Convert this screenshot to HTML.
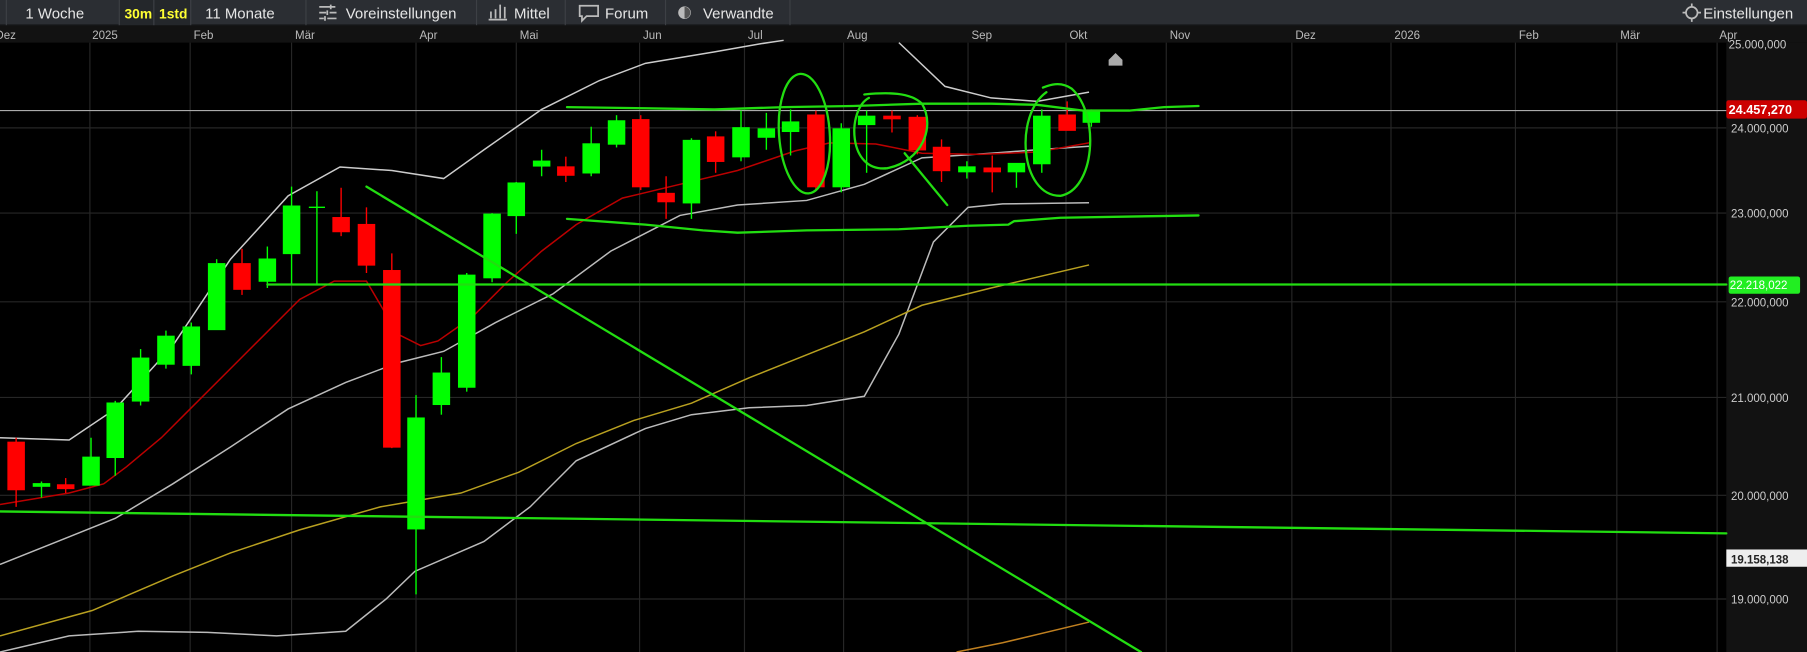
<!DOCTYPE html>
<html><head><meta charset="utf-8"><style>
html,body{margin:0;padding:0;background:#000;width:1807px;height:652px;overflow:hidden}
svg{display:block}
text{font-family:"Liberation Sans",sans-serif}
</style></head><body>
<svg width="1807" height="652" viewBox="0 0 1568 566" preserveAspectRatio="none" xmlns="http://www.w3.org/2000/svg">
<rect width="1568" height="566" fill="#000"/>
<rect x="0" y="0" width="1568" height="22" fill="#2b2e33"/>
<rect x="0" y="21" width="1568" height="1" fill="#1a1c1f"/>
<rect x="103" y="0" width="62" height="22" fill="#24272b"/>
<g fill="#3d4045"><rect x="5" y="0" width="1" height="22"/><rect x="103" y="0" width="1" height="22"/><rect x="133" y="0" width="1" height="22"/><rect x="165" y="0" width="1" height="22"/><rect x="265" y="0" width="1" height="22"/><rect x="413" y="0" width="1" height="22"/><rect x="490" y="0" width="1" height="22"/><rect x="577" y="0" width="1" height="22"/><rect x="685" y="0" width="1" height="22"/></g>
<g font-size="13" fill="#e6e6e6">
<text x="22" y="16">1 Woche</text>
<text x="108" y="16" fill="#ffff33" font-size="12" font-weight="bold">30m</text>
<text x="138" y="16" fill="#ffff33" font-size="12" font-weight="bold">1std</text>
<text x="178" y="16">11 Monate</text>
<text x="300" y="16">Voreinstellungen</text>
<text x="446" y="16">Mittel</text>
<text x="525" y="16">Forum</text>
<text x="610" y="16">Verwandte</text>
<text x="1478" y="16">Einstellungen</text>
</g>
<g stroke="#bbb" stroke-width="1.5" fill="none">
<path d="M277 6h14M277 11h6M286 11h6M277 16h4M284 16h8M287 4v4M284 9v4M282 14v4"/>
<path d="M426 16v-6M430 16v-8M434 16v-12M438 16v-10M424 17h16"/>
<path d="M503 5h16v9h-10l-4 4v-4h-2z"/>
<path d="M1463 11a5 5 0 1 0 10 0a5 5 0 1 0 -10 0M1468 3v3M1468 16v3M1460 11h3M1473 11h3"/>
</g>
<circle cx="594" cy="11" r="5.5" fill="#bbb"/><path d="M594 6a5 5 0 0 1 0 10z" fill="#555"/>
<rect x="0" y="22" width="1568" height="15" fill="#121212"/>
<g font-size="10" fill="#bbb">
<text x="-4" y="34">Dez</text><text x="80" y="34">2025</text><text x="168" y="34">Feb</text><text x="256" y="34">Mär</text><text x="364" y="34">Apr</text><text x="451" y="34">Mai</text><text x="558" y="34">Jun</text><text x="649" y="34">Jul</text><text x="735" y="34">Aug</text><text x="843" y="34">Sep</text><text x="928" y="34">Okt</text><text x="1015" y="34">Nov</text><text x="1124" y="34">Dez</text><text x="1210" y="34">2026</text><text x="1318" y="34">Feb</text><text x="1406" y="34">Mär</text><text x="1492" y="34">Apr</text>
</g>
<g stroke="#262626" stroke-width="1">
<path d="M78 37V566M165 37V566M253 37V566M361 37V566M448 37V566M555 37V566M646 37V566M732 37V566M840 37V566M925 37V566M1012 37V566M1121 37V566M1207 37V566M1315 37V566M1403 37V566M1490 37V566"/>
<path d="M0 111H1498M0 185H1498M0 262H1498M0 345H1498M0 430H1498M0 520H1498"/>
</g>
<rect x="1498" y="37" width="70" height="529" fill="#121212"/>
<g font-size="10" fill="#ccc">
<text x="1500" y="42">25.000,000</text><text x="1502" y="115">24.000,000</text><text x="1502" y="189">23.000,000</text><text x="1502" y="266">22.000,000</text><text x="1502" y="349">21.000,000</text><text x="1502" y="434">20.000,000</text><text x="1502" y="524">19.000,000</text>
</g>
<rect x="1498" y="87" width="70" height="16" rx="2" fill="#cc0000"/><text x="1500" y="99" font-size="11" font-weight="bold" fill="#fff">24.457,270</text>
<rect x="1500" y="240" width="62" height="15" rx="2" fill="#22ee22"/><text x="1501" y="251" font-size="10" fill="#fff">22.218,022</text>
<rect x="1498" y="477" width="70" height="15" fill="#eee"/><text x="1502" y="489" font-size="10" font-weight="bold" fill="#222">19.158,138</text>
<path d="M0 96H1498" stroke="#aaa" stroke-width="1"/>
<path d="M962 52l6-6 6 6v5h-12z" fill="#aaa"/>
<g fill="none" stroke-width="1.3">
<path stroke="#ccc" d="M0 380L60 382L100 355L150 300L200 225L250 170L295 145L340 148L385 155L420 130L470 95L520 70L560 55L620 45L660 38L680 35M780 37L820 75L860 85L900 88L945 80"/>
<path stroke="#bbb" d="M0 490L50 470L100 450L150 420L200 388L250 355L300 332L345 315L385 305L430 280L480 255L530 218L590 187L640 178L700 174L750 160L800 137L860 133L900 130L945 127"/>
<path stroke="#bbb" d="M0 566L60 552L120 548L180 549L240 552L300 548L335 520L360 496L420 470L460 440L500 400L560 372L600 360L650 354L700 352L750 344L780 290L810 210L840 180L870 177L945 176"/>
<path stroke="#b00" d="M0 438L60 428L90 420L110 405L140 380L160 360L200 320L230 290L260 260L290 244L318 244L345 290L365 300L380 296L410 275L440 245L470 218L500 195L540 172L590 160L640 148L690 131L720 124L760 125L800 133L850 134L900 132L945 124"/>
<path stroke="#b8a020" d="M0 552L80 530L150 500L200 480L260 460L330 440L400 428L450 410L500 385L550 365L600 350L650 328L700 308L750 288L800 265L860 250L945 230"/>
<path stroke="#c08020" d="M830 566L870 558L945 540"/>
</g>
<g stroke-width="1.2">
<g stroke="#f00" fill="#f00"><path d="M14 380V440"/><rect x="7" y="384" width="14" height="41"/></g>
<g stroke="#0f0" fill="#0f0"><path d="M36 418V432"/><rect x="29" y="420" width="14" height="2"/></g>
<g stroke="#f00" fill="#f00"><path d="M57 415V428"/><rect x="50" y="421" width="14" height="3"/></g>
<g stroke="#0f0" fill="#0f0"><path d="M79 380V421"/><rect x="72" y="397" width="14" height="24"/></g>
<g stroke="#0f0" fill="#0f0"><path d="M100 348V413"/><rect x="93" y="350" width="14" height="47"/></g>
<g stroke="#0f0" fill="#0f0"><path d="M122 303V352"/><rect x="115" y="311" width="14" height="37"/></g>
<g stroke="#0f0" fill="#0f0"><path d="M144 287V320"/><rect x="137" y="292" width="14" height="24"/></g>
<g stroke="#0f0" fill="#0f0"><path d="M166 280V325"/><rect x="159" y="284" width="14" height="33"/></g>
<g stroke="#0f0" fill="#0f0"><path d="M188 225V286"/><rect x="181" y="229" width="14" height="57"/></g>
<g stroke="#f00" fill="#f00"><path d="M210 216V256"/><rect x="203" y="229" width="14" height="22"/></g>
<g stroke="#0f0" fill="#0f0"><path d="M232 214V250"/><rect x="225" y="225" width="14" height="19"/></g>
<g stroke="#0f0" fill="#0f0"><path d="M253 162V247"/><rect x="246" y="179" width="14" height="41"/></g>
<g stroke="#0f0" fill="#0f0"><path d="M275 166V247"/><path d="M268 180H282"/></g>
<g stroke="#f00" fill="#f00"><path d="M296 163V205"/><rect x="289" y="189" width="14" height="12"/></g>
<g stroke="#f00" fill="#f00"><path d="M318 180V237"/><rect x="311" y="195" width="14" height="35"/></g>
<g stroke="#f00" fill="#f00"><path d="M340 220V389"/><rect x="333" y="235" width="14" height="153"/></g>
<g stroke="#0f0" fill="#0f0"><path d="M361 343V516"/><rect x="354" y="363" width="14" height="96"/></g>
<g stroke="#0f0" fill="#0f0"><path d="M383 310V360"/><rect x="376" y="324" width="14" height="27"/></g>
<g stroke="#0f0" fill="#0f0"><path d="M405 237V340"/><rect x="398" y="239" width="14" height="97"/></g>
<g stroke="#0f0" fill="#0f0"><path d="M427 185V245"/><rect x="420" y="186" width="14" height="55"/></g>
<g stroke="#0f0" fill="#0f0"><path d="M448 158V203"/><rect x="441" y="159" width="14" height="28"/></g>
<g stroke="#0f0" fill="#0f0"><path d="M470 130V153"/><rect x="463" y="140" width="14" height="4"/></g>
<g stroke="#f00" fill="#f00"><path d="M491 136V158"/><rect x="484" y="145" width="14" height="7"/></g>
<g stroke="#0f0" fill="#0f0"><path d="M513 110V153"/><rect x="506" y="125" width="14" height="25"/></g>
<g stroke="#0f0" fill="#0f0"><path d="M535 100V128"/><rect x="528" y="105" width="14" height="20"/></g>
<g stroke="#f00" fill="#f00"><path d="M556 100V165"/><rect x="549" y="104" width="14" height="58"/></g>
<g stroke="#f00" fill="#f00"><path d="M578 153V190"/><rect x="571" y="168" width="14" height="7"/></g>
<g stroke="#0f0" fill="#0f0"><path d="M600 120V190"/><rect x="593" y="122" width="14" height="54"/></g>
<g stroke="#f00" fill="#f00"><path d="M621 114V150"/><rect x="614" y="119" width="14" height="21"/></g>
<g stroke="#0f0" fill="#0f0"><path d="M643 96V140"/><rect x="636" y="111" width="14" height="25"/></g>
<g stroke="#0f0" fill="#0f0"><path d="M665 98V130"/><rect x="658" y="112" width="14" height="7"/></g>
<g stroke="#0f0" fill="#0f0"><path d="M686 95V135"/><rect x="679" y="106" width="14" height="8"/></g>
<g stroke="#f00" fill="#f00"><path d="M708 96V165"/><rect x="701" y="100" width="14" height="62"/></g>
<g stroke="#0f0" fill="#0f0"><path d="M730 107V167"/><rect x="723" y="112" width="14" height="50"/></g>
<g stroke="#0f0" fill="#0f0"><path d="M752 96V150"/><rect x="745" y="101" width="14" height="7"/></g>
<g stroke="#f00" fill="#f00"><path d="M774 96V115"/><rect x="767" y="101" width="14" height="2"/></g>
<g stroke="#f00" fill="#f00"><path d="M796 100V134"/><rect x="789" y="102" width="14" height="28"/></g>
<g stroke="#f00" fill="#f00"><path d="M817 121V158"/><rect x="810" y="128" width="14" height="20"/></g>
<g stroke="#0f0" fill="#0f0"><path d="M839 140V155"/><rect x="832" y="145" width="14" height="4"/></g>
<g stroke="#f00" fill="#f00"><path d="M861 135V167"/><rect x="854" y="146" width="14" height="3"/></g>
<g stroke="#0f0" fill="#0f0"><path d="M882 142V163"/><rect x="875" y="142" width="14" height="7"/></g>
<g stroke="#0f0" fill="#0f0"><path d="M904 95V150"/><rect x="897" y="101" width="14" height="41"/></g>
<g stroke="#f00" fill="#f00"><path d="M926 88V113"/><rect x="919" y="100" width="14" height="13"/></g>
<g stroke="#0f0" fill="#0f0"><path d="M947 95V110"/><rect x="940" y="97" width="14" height="9"/></g>
</g>
<g fill="none" stroke="#22dd11" stroke-width="2" stroke-linecap="round">
<path d="M232 247H1498"/>
<path d="M0 444L1498 463"/>
<path d="M318 162L990 566"/>
<path d="M492 93L560 94L620 95L680 93L740 92L800 90L860 90L900 91L940 96L980 96L1010 93L1040 92"/>
<path d="M492 190L560 195L610 200L640 202L700 200L780 199L840 196L875 195L880 192L920 189L980 188L1040 187"/>
<ellipse cx="698" cy="116" rx="22" ry="52" transform="rotate(-4 698 116)"/>
<path d="M754 85C735 95 735 150 770 146C800 140 812 110 800 90C790 80 770 80 750 82"/>
<path d="M785 133L822 178"/>
<path d="M908 80C880 100 885 170 920 170C950 165 955 100 930 77C920 70 910 74 905 76"/>
</g>
</svg>
</body></html>
